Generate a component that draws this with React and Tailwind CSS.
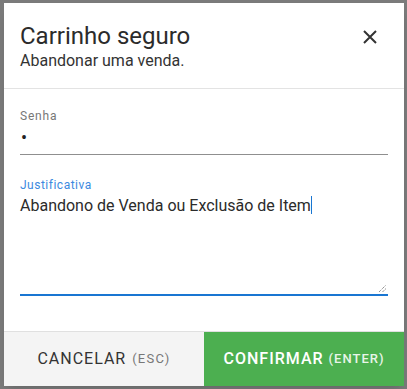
import React from "react";

const CloseIcon = () => (
  <svg width="16" height="16" viewBox="0 0 16 16" fill="none">
    <path d="M2 2L14 14M14 2L2 14" stroke="#333" strokeWidth="2" />
  </svg>
);

export default function App() {
  return (
    <div className="w-[407px] h-[389px] bg-[#7b7b7b] pt-[3px] pl-[4px] overflow-hidden" style={{ fontFamily: "Roboto, 'Liberation Sans', sans-serif" }}>
      <div className="w-[400px] h-[383px] bg-white flex flex-col shadow-lg">
        {/* Cabecalho */}
        <div className="flex justify-between items-start pl-[16px] pr-[26px] pt-[19px] h-[86px] border-b border-[#e3e3e3]">
          <div>
            <h1 className="text-[24px] leading-[28px] text-[#2b2b2b]">Carrinho seguro</h1>
            <p className="text-[16px] leading-[20px] text-[#333] mt-[1px]">Abandonar uma venda.</p>
          </div>
          <button className="mt-[7px]"><CloseIcon /></button>
        </div>

        {/* Campos */}
        <div className="flex-1 pl-[16px] pr-[16px] pt-[20px]">
          <label className="block text-[12px] leading-[14px] tracking-[0.8px] text-[#777]">Senha</label>
          <div className="h-[32px] border-b border-[#8f8f8f] text-[18px] leading-[28px] pt-[1px] text-[#222] pl-[1px]">•</div>

          <label className="block mt-[23px] text-[12px] leading-[14px] tracking-[0.5px] text-[#3b8ae0]">Justificativa</label>
          <div className="relative h-[104px] border-b-2 border-[#1976d2] pt-[2px]">
            <span className="text-[16px] leading-[20px] text-[#2b2b2b]">Abandono de Venda ou Exclusão de Item</span>
            <span className="inline-block w-[1px] h-[18px] bg-[#1976d2] align-[-3px]"></span>
            <svg className="absolute right-[1px] bottom-[1px]" width="9" height="9" viewBox="0 0 9 9">
              <path d="M1 8L8 1M4.5 8L8 4.5" stroke="#666" strokeWidth="1" strokeDasharray="1 1" />
            </svg>
          </div>
        </div>

        {/* Rodape */}
        <div className="flex h-[55px] border-t border-[#e0e0e0]">
          <button className="w-[200px] bg-[#f4f4f4] flex items-center justify-center gap-[6px] text-[#333]">
            <span className="text-[16px] tracking-[1px]">CANCELAR</span>
            <span className="text-[13px] tracking-[1.2px] text-[#777]">(ESC)</span>
          </button>
          <button className="flex-1 bg-[#4caf50] flex items-center justify-center gap-[5px] text-white">
            <span className="text-[16px] font-medium tracking-[1px]">CONFIRMAR</span>
            <span className="text-[13px] font-medium tracking-[1px] text-[#e8f5e9]">(ENTER)</span>
          </button>
        </div>
      </div>
    </div>
  );
}
